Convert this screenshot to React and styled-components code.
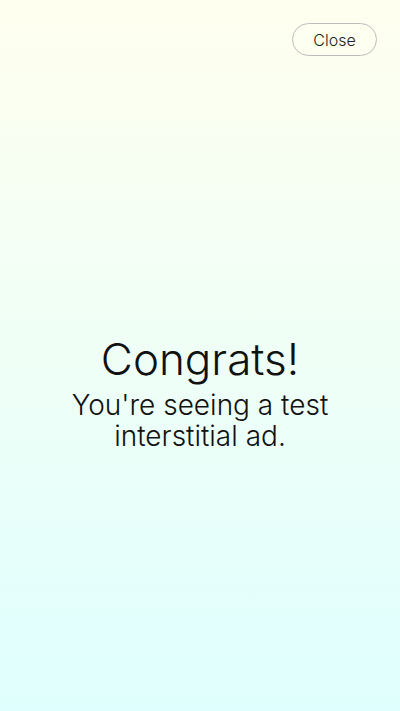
import React from 'react';
import styled, { createGlobalStyle } from 'styled-components';

const GlobalStyle = createGlobalStyle`
  html, body {
    margin: 0;
    padding: 0;
    height: 100%;
  }
  body {
    font-family: Inter, "Noto Sans", sans-serif;
  }
  #root {
    height: 100%;
  }
`;

const Screen = styled.div`
  height: 711px;
  box-sizing: border-box;
  background: linear-gradient(to bottom, #ffffef 0%, #dffffe 100%);
  display: flex;
  flex-direction: column;
  padding: 23px 23px 0;
`;

const TopBar = styled.div`
  display: flex;
  justify-content: flex-end;
`;

const CloseButton = styled.button`
  font-family: inherit;
  font-size: 16px;
  font-weight: 300;
  color: #222;
  background: transparent;
  border: 1px solid #bcbcbc;
  border-radius: 999px;
  width: 85px;
  height: 33px;
  padding: 0;
  cursor: pointer;
`;

const Content = styled.div`
  flex: 1;
  display: flex;
  flex-direction: column;
  align-items: center;
  justify-content: center;
  text-align: center;
  color: #111;
  padding-top: 16px;
`;

const Title = styled.h1`
  margin: 0;
  font-size: 44px;
  font-weight: 300;
  line-height: 54px;
`;

const Subtitle = styled.p`
  margin: 4px 0 0;
  font-size: 28px;
  font-weight: 300;
  line-height: 31px;
`;

function App() {
  return (
    <>
      <GlobalStyle />
      <Screen>
        <TopBar>
          <CloseButton>Close</CloseButton>
        </TopBar>
        <Content>
          <Title>Congrats!</Title>
          <Subtitle>
            You're seeing a test
            <br />
            interstitial ad.
          </Subtitle>
        </Content>
      </Screen>
    </>
  );
}

export default App;
